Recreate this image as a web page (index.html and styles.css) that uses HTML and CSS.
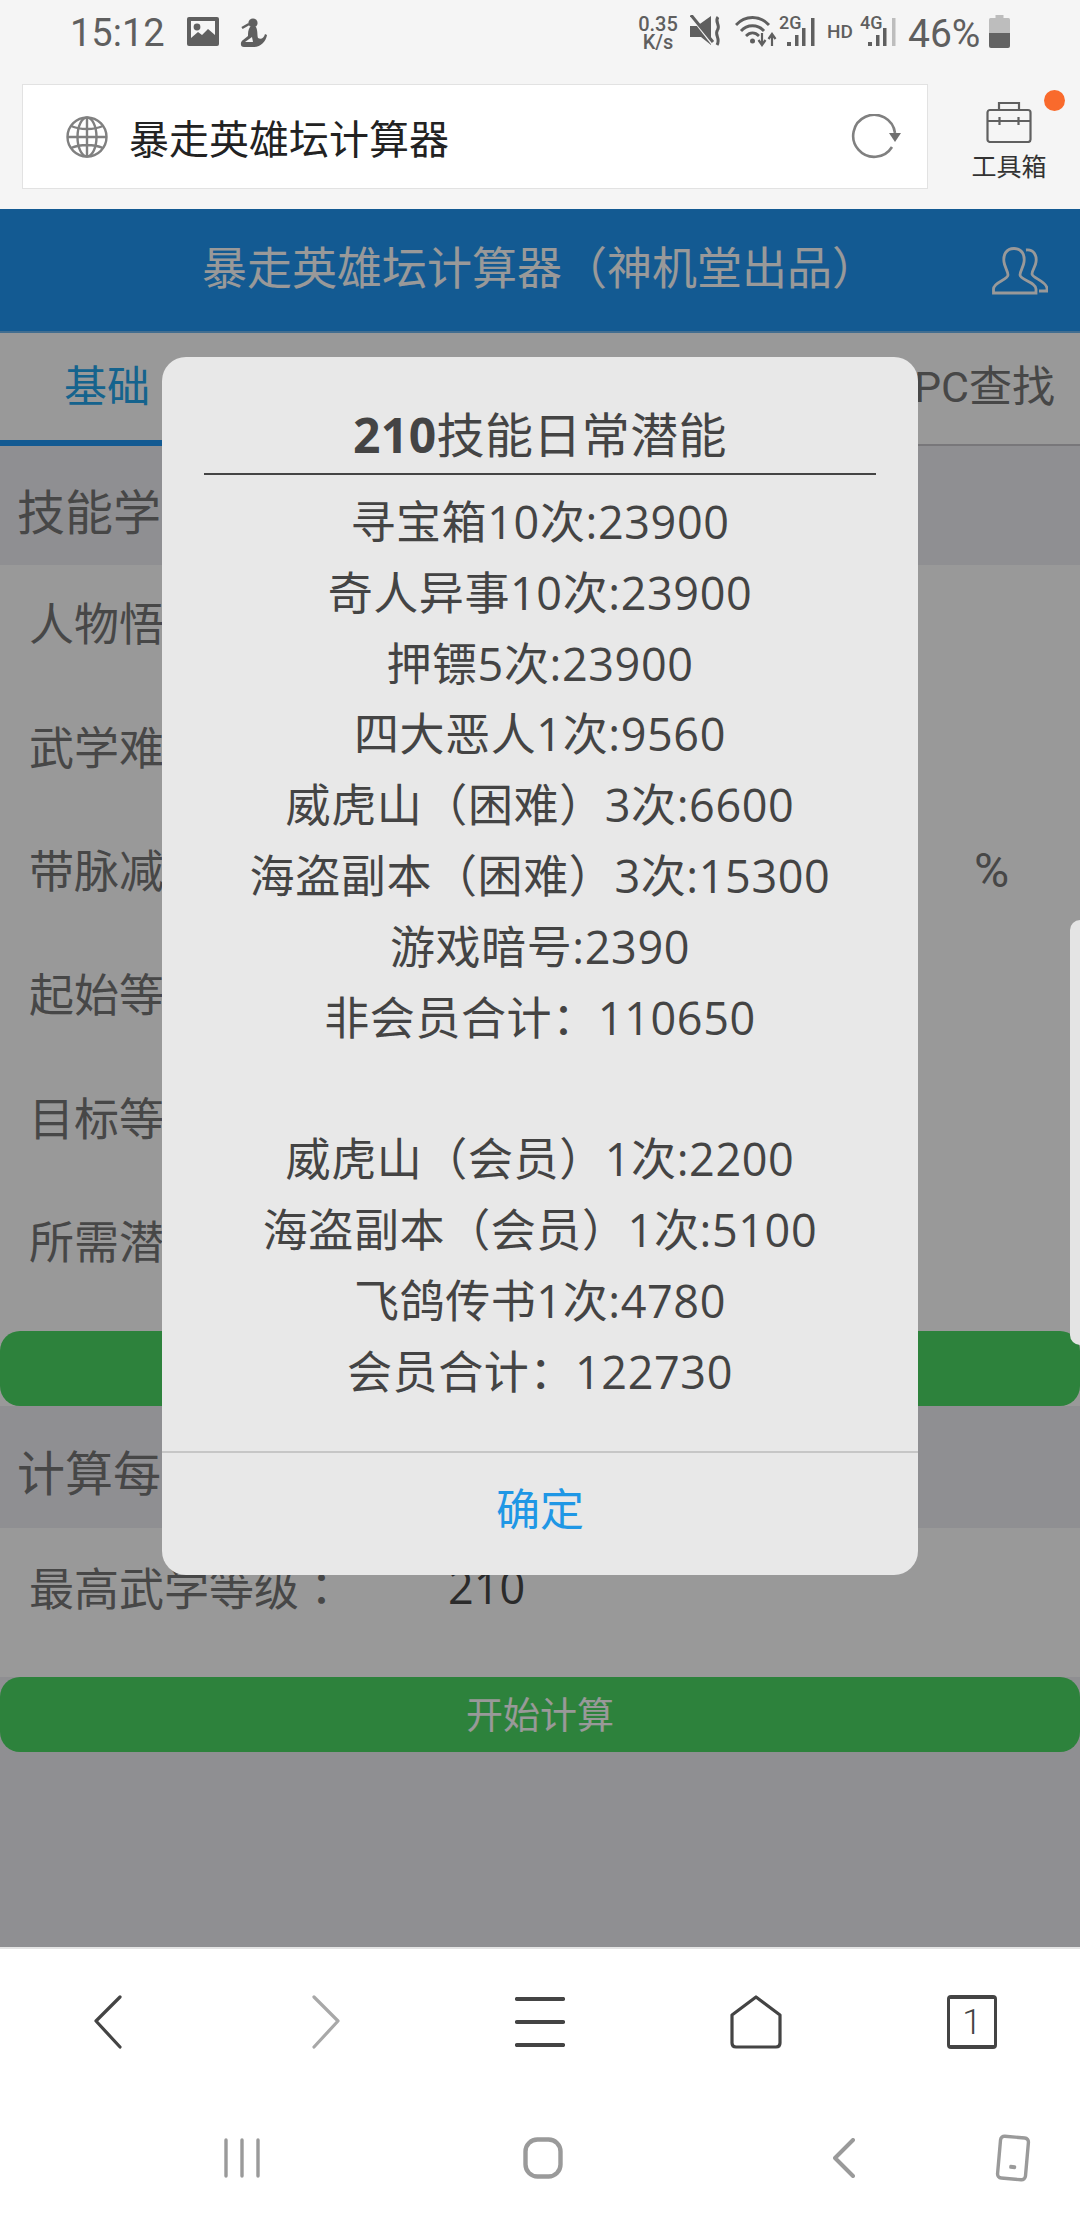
FILE: index.html
```html
<!DOCTYPE html>
<html lang="zh-CN">

<head>
  <meta charset="UTF-8">
  <title>暴走英雄坛计算器</title>
  <link rel="stylesheet" href="styles.css">
</head>

<body>

  <div class="status-bar">
    <span class="clock">15:12</span>
    <svg class="st-image" viewBox="0 0 32 29">
      <rect width="32" height="29" rx="2" fill="#5f5f5f" />
      <rect x="4" y="4" width="24" height="21" fill="#f5f5f5" />
      <circle cx="10" cy="10" r="3.4" fill="#5f5f5f" />
      <path d="M4 21 L11 15 L15 18 L21 12 L28 18 V25 H4 Z" fill="#5f5f5f" />
    </svg>
    <svg class="st-figure" viewBox="0 0 27 29">
      <circle cx="13" cy="5" r="4.6" fill="#5f5f5f" />
      <path d="M2 10 L9 6" stroke="#5f5f5f" stroke-width="2.4" />
      <path d="M10 9 H16 C18 13 17 17 18 20 C21 22 24 20 25 16 L27 17 C26 23 21 29 14 29 H4 C0 29 0 24 3 22 L8 18 C8 15 8 12 10 9 Z" fill="#5f5f5f" />
      <path d="M5 24 L12 19 L13 24 Z" fill="#f5f5f5" />
    </svg>

    <div class="status-right">
      <div class="netspeed">0.35<br>K/s</div>
      <svg class="st-mute" viewBox="0 0 32 32">
        <path d="M0 11 H7 L21 1 V30 L11 22 H0 Z" fill="#5f5f5f" />
        <path d="M1 2 L22 29" stroke="#f5f5f5" stroke-width="2" />
        <path d="M1 0 L23 27" stroke="#5f5f5f" stroke-width="3" />
        <path d="M28 2 C24 7 31 10 27.500 15 C24 20 31 23 27 30" fill="none" stroke="#5f5f5f" stroke-width="3" />
      </svg>
      <svg class="st-wifi" viewBox="0 0 42 32">
        <g fill="none" stroke="#5f5f5f" stroke-width="2.800">
          <path d="M1 10 C10 0 25 0 34 10" />
          <path d="M6 16 C12 9 23 9 29 16" />
          <path d="M11 21 C15 17 20 17 24 21" />
        </g>
        <circle cx="17.500" cy="26" r="2.500" fill="#5f5f5f" />
        <path d="M27 18 V29 M23.500 25 L27 30 L30.500 25 M37 31 V20 M33.500 24 L37 19 L40.500 24" fill="none" stroke="#5f5f5f" stroke-width="2.200" />
      </svg>
      <svg class="st-signal" viewBox="0 -6 36 38">
        <text class="sig-label" x="0" y="14">2G</text>
        <rect x="8" y="27" width="4" height="4" fill="#5f5f5f" />
        <rect x="16" y="20" width="3.500" height="11" fill="#5f5f5f" />
        <rect x="23" y="13" width="3.500" height="18" fill="#5f5f5f" />
        <rect x="32" y="3" width="3.500" height="28" fill="#5f5f5f" />
      </svg>
      <span class="hd">HD</span>
      <svg class="st-signal" viewBox="0 -6 36 38">
        <text class="sig-label" x="0" y="14">4G</text>
        <rect x="8" y="27" width="4" height="4" fill="#5f5f5f" />
        <rect x="16" y="20" width="3.500" height="11" fill="#5f5f5f" />
        <rect x="23" y="13" width="3.500" height="18" fill="#5f5f5f" />
        <rect x="32" y="3" width="3.500" height="28" fill="#bdbdbd" />
      </svg>
      <span class="percent">46%</span>
      <svg class="st-battery" viewBox="0 0 21 33">
        <rect x="6.500" width="8" height="4" fill="#bdbdbd" />
        <path d="M1.500 3 H19.500 Q21 3 21 4.500 V18 H0 V4.500 Q0 3 1.500 3 Z" fill="#bdbdbd" />
        <path d="M0 18 H21 V31 Q21 33 19 33 H2 Q0 33 0 31 Z" fill="#636363" />
      </svg>
    </div>
  </div>

  <div class="browser-bar">
    <div class="address">
      <svg class="globe" viewBox="0 0 42 42" fill="none" stroke="#808080" stroke-width="2.400">
        <circle cx="21" cy="21" r="19.500" />
        <ellipse cx="21" cy="21" rx="9.500" ry="19.500" />
        <path d="M21 1.500 V40.500 M1.500 21 H40.500 M5 10 C14 14 28 14 37 10 M5 32 C14 28 28 28 37 32" />
      </svg>
      <span class="address-text">暴走英雄坛计算器</span>
      <svg class="reload" viewBox="0 0 50 46">
        <path d="M41 33 A21 21 0 1 1 44 19" fill="none" stroke="#808080" stroke-width="2.600" />
        <path d="M38 19 H50 L44 28 Z" fill="#707070" />
      </svg>
    </div>
    <div class="toolbox">
      <span class="toolbox-dot"></span>
      <svg class="toolbox-icon" viewBox="0 0 46 42" fill="none" stroke="#606060" stroke-width="2.200">
        <rect x="1.500" y="9" width="43" height="32" rx="2.500" />
        <path d="M13 9 V2 H33 V9 M1.500 20 H44.500 M13.500 16 V24 M32.500 16 V24" />
      </svg>
      <span class="toolbox-label">工具箱</span>
    </div>
  </div>

  <div class="webview">
    <header class="app-header">
      <h1>暴走英雄坛计算器（神机堂出品）</h1>
      <svg class="users" viewBox="0 0 56 48" fill="none" stroke="#fff" stroke-width="2.800">
        <path d="M22 1.500 C30 1.500 33 8 32 15 C31.500 20 28 24 28 28 C28 33 44 35 44 42 V46 H1.500 V42 C1.500 35 16 33 16 28 C16 24 12.500 20 12 15 C11 8 14 1.500 22 1.500 Z" />
        <path d="M34 3 C42 2 45 9 44 15 C43.500 20 40 23 40 27 C40 31 54 34 55 41 V44 H47" />
      </svg>
    </header>

    <nav class="tabs">
      <div class="tab active">基础</div>
      <div class="tab last">PC查找</div>
    </nav>

    <section class="band"><span>技能学</span></section>
    <div class="row">人物悟</div>
    <div class="row">武学难</div>
    <div class="row">带脉减<span class="unit">%</span></div>
    <div class="row">起始等</div>
    <div class="row">目标等</div>
    <div class="row">所需潜</div>
    <div class="btn-wrap"><button class="btn"></button></div>

    <section class="band band-two"><span>计算每</span></section>
    <div class="row row-level">最高武学等级<span class="mid-colon">：</span><span class="value">210</span></div>
    <button class="btn">开始计算</button>

    <div class="backdrop">
      <div class="dialog">
        <div class="dialog-title"><b>210</b>技能日常潜能</div>
        <div class="dialog-body">
          <p>寻宝箱10次:23900</p>
          <p>奇人异事10次:23900</p>
          <p>押镖5次:23900</p>
          <p>四大恶人1次:9560</p>
          <p>威虎山（困难）3次:6600</p>
          <p>海盗副本（困难）3次:15300</p>
          <p>游戏暗号:2390</p>
          <p>非会员合计<span class="mid-colon">：</span>110650</p>
          <p>&nbsp;</p>
          <p>威虎山（会员）1次:2200</p>
          <p>海盗副本（会员）1次:5100</p>
          <p>飞鸽传书1次:4780</p>
          <p>会员合计<span class="mid-colon">：</span>122730</p>
        </div>
        <div class="dialog-ok">确定</div>
      </div>
    </div>
  </div>

  <div class="toolbar">
    <svg class="tb-chevron" viewBox="0 0 28 54" fill="none" stroke="#444" stroke-width="3.200" stroke-linecap="round" stroke-linejoin="round">
      <path d="M26 2 L2 26 L26 52" />
    </svg>
    <svg class="tb-chevron tb-forward" viewBox="0 0 28 54" fill="none" stroke="#a8a8a8" stroke-width="3.200" stroke-linecap="round" stroke-linejoin="round">
      <path d="M2 2 L26 26 L2 52" />
    </svg>
    <svg class="tb-menu" viewBox="0 0 50 50" fill="none" stroke="#444" stroke-width="4.200" stroke-linecap="round">
      <path d="M2 2 H48 M2 25 H48 M2 48 H48" />
    </svg>
    <svg class="tb-home" viewBox="0 0 52 54" fill="none" stroke="#444" stroke-width="3.200" stroke-linejoin="round">
      <path d="M26 2 L50 20 V48 Q50 52 46 52 H6 Q2 52 2 48 V20 Z" />
    </svg>
    <div class="tb-tabs">1</div>
  </div>

  <div class="navbar">
    <div class="nav-item">
      <svg class="nav-recents" viewBox="0 0 36 40" fill="none" stroke="#9a9a9a" stroke-width="3.400" stroke-linecap="round">
        <path d="M2 2 V38 M18 2 V38 M34 2 V38" />
      </svg>
    </div>
    <div class="nav-item">
      <svg class="nav-home" viewBox="0 0 40 42">
        <rect x="2.500" y="2.500" width="35" height="37" rx="12" fill="none" stroke="#9a9a9a" stroke-width="4.400" />
      </svg>
    </div>
    <div class="nav-item">
      <svg class="nav-back" viewBox="0 0 22 40" fill="none" stroke="#9a9a9a" stroke-width="4" stroke-linecap="round" stroke-linejoin="round">
        <path d="M20 2 L2 20 L20 38" />
      </svg>
    </div>
    <div class="nav-phone">
      <svg viewBox="0 0 38 48" fill="none" stroke="#9a9a9a">
        <g transform="rotate(5 19 24)">
          <rect x="5" y="3" width="28" height="42" rx="4" stroke-width="3.400" />
          <rect x="16" y="31" width="7" height="4" rx="1.500" fill="#9a9a9a" stroke="none" />
        </g>
      </svg>
    </div>
  </div>

  <div class="edge-handle"></div>

</body>

</html>
```

FILE: styles.css
```css
* {
  box-sizing: border-box;
}

html,
body {
  margin: 0;
  padding: 0;
}

body {
  position: relative;
  width: 1080px;
  height: 2220px;
  overflow: hidden;
  display: flex;
  flex-direction: column;
  font-family: Roboto, "Noto Sans CJK SC", sans-serif;
  background: #fff;
  color: #333;
}

svg {
  display: block;
  flex-shrink: 0;
}

/* centred full-width colon, as the reference draws it */
.mid-colon {
  font-family: "Noto Sans CJK TC", sans-serif;
  line-height: 0;
}

/* Status bar */
.status-bar {
  height: 84px;
  padding-left: 70px;
  display: flex;
  align-items: flex-start;
  background: #f5f5f5;
  color: #5f5f5f;
}

.clock {
  width: 95px;
  margin-top: 11px;
  font-size: 38px;
  line-height: 44px;
}

.st-image {
  width: 32px;
  height: 29px;
  margin: 17px 0 0 22px;
}

.st-figure {
  width: 27px;
  height: 29px;
  margin: 18px 0 0 21px;
}

.status-right {
  margin-left: auto;
  padding: 15px 70px 0 0;
  display: flex;
  align-items: flex-start;
}

.netspeed {
  width: 42px;
  margin-right: 11px;
  font-size: 20px;
  font-weight: 500;
  line-height: 18px;
  text-align: center;
}

.st-mute {
  width: 32px;
  height: 32px;
  margin-right: 13px;
}

.st-wifi {
  width: 42px;
  height: 32px;
  margin-right: 2px;
}

.st-signal {
  width: 36px;
  height: 38px;
  margin: -6px 12px 0 0;
}

.sig-label {
  font-size: 18px;
  font-weight: 500;
  fill: #5f5f5f;
}

.hd {
  width: 25px;
  margin: 8px 8px 0 0;
  font-size: 19px;
  font-weight: 500;
  line-height: 18px;
}

.percent {
  width: 70px;
  margin-right: 11px;
  font-size: 39px;
  line-height: 38px;
}

.st-battery {
  width: 21px;
  height: 33px;
}

/* Browser bar */
.browser-bar {
  height: 125px;
  display: flex;
  align-items: flex-start;
  background: #f5f5f5;
}

.address {
  width: 906px;
  height: 105px;
  margin-left: 22px;
  padding-left: 43px;
  display: flex;
  align-items: center;
  background: #fff;
  border: 1px solid #e2e2e2;
}

.globe {
  width: 42px;
  height: 42px;
}

.address-text {
  margin-left: 21px;
  font-size: 40px;
  color: #222;
}

.reload {
  width: 50px;
  height: 46px;
  margin-left: auto;
  margin-right: 26px;
}

.toolbox {
  position: relative;
  flex: 1;
  padding: 17px 0 0 10px;
  display: flex;
  flex-direction: column;
  align-items: center;
}

.toolbox-dot {
  position: absolute;
  top: 6px;
  left: 116px;
  width: 21px;
  height: 21px;
  border-radius: 50%;
  background: #f96a2c;
}

.toolbox-icon {
  width: 46px;
  height: 42px;
}

.toolbox-label {
  margin-top: 9px;
  font-size: 25px;
  line-height: 32px;
  color: #333;
}

/* Page below the backdrop */
.webview {
  position: relative;
  height: 1738px;
  background: #efeff4;
  overflow: hidden;
}

.app-header {
  height: 124px;
  padding: 0 32px 0 202px;
  display: flex;
  align-items: center;
  justify-content: space-between;
  background: #2196f3;
  border-bottom: 2px solid #6fb8f0;
}

.app-header h1 {
  margin: 0;
  font-size: 45px;
  font-weight: 400;
  line-height: 60px;
  color: #fff;
}

.users {
  width: 56px;
  height: 48px;
  margin-top: 2px;
}

.tabs {
  height: 113px;
  padding-bottom: 12px;
  display: flex;
  align-items: center;
  justify-content: space-between;
  background: #fff;
  border-bottom: 2px solid #c8c7cc;
  position: relative;
}

.tab {
  font-size: 43px;
  color: #777;
}

.tab.active {
  padding-left: 64px;
  color: #23a5ec;
}

.tab.active::after {
  content: '';
  position: absolute;
  left: 0;
  bottom: -2px;
  width: 220px;
  height: 6px;
  background: #2196f3;
}

.tab.last {
  padding-right: 25px;
}

.band {
  height: 119px;
  padding: 6px 0 0 17px;
  display: flex;
  align-items: center;
  font-size: 48px;
  color: #777;
}

.band-two {
  height: 122px;
}

.row {
  position: relative;
  height: 123.7px;
  padding: 0 0 11px 29px;
  display: flex;
  align-items: center;
  font-size: 45px;
  color: #777;
  background: #fff;
}

.unit {
  position: absolute;
  left: 974px;
  top: 33px;
  font-size: 48px;
  line-height: 52px;
}

.btn-wrap {
  padding-top: 24px;
  background: #fff;
}

.btn {
  display: block;
  width: 1080px;
  height: 75px;
  padding: 0 0 4px;
  border: none;
  border-radius: 20px;
  font-family: inherit;
  font-size: 37px;
  color: #fff;
  background: #4cd964;
}

.row-level {
  height: 149px;
  padding-bottom: 32px;
}

.value {
  margin-left: 104px;
  font-family: "Open Sans", sans-serif;
  color: #484848;
}

/* Backdrop and dialog */
.backdrop {
  position: absolute;
  top: 0;
  left: 0;
  width: 100%;
  height: 100%;
  padding-top: 148px;
  display: flex;
  justify-content: center;
  align-items: flex-start;
  background: rgba(0, 0, 0, 0.4);
}

.dialog {
  width: 756px;
  height: 1218px;
  display: flex;
  flex-direction: column;
  border-radius: 24px;
  background: #e8e8e8;
  color: #444;
  font-family: "Open Sans", "Noto Sans CJK SC", sans-serif;
  text-align: center;
}

.dialog-title {
  margin: 0 42px;
  padding: 54px 0 14px;
  font-size: 48px;
  line-height: 48px;
  letter-spacing: 0.4px;
  border-bottom: 2px solid #444;
}

.dialog-body {
  padding-top: 12px;
  font-size: 45px;
  line-height: 70px;
  letter-spacing: 0.6px;
}

.dialog-body p {
  height: 70.8px;
  margin: 0;
}

.dialog-ok {
  margin-top: auto;
  height: 124px;
  padding-bottom: 14px;
  display: flex;
  align-items: center;
  justify-content: center;
  font-size: 44px;
  color: #1f97e5;
  border-top: 2px solid #c6c6c6;
}

/* Browser toolbar */
.toolbar {
  height: 148px;
  display: grid;
  grid-template-columns: repeat(5, 216px);
  justify-items: center;
  align-items: center;
  background: #fff;
  border-top: 2px solid #e4e4e4;
}

.tb-chevron {
  width: 28px;
  height: 54px;
}

.tb-forward {
  margin-left: 3px;
}

.tb-menu {
  width: 50px;
  height: 50px;
}

.tb-home {
  width: 52px;
  height: 54px;
}

.tb-tabs {
  width: 50px;
  height: 54px;
  display: flex;
  align-items: center;
  justify-content: center;
  font-size: 35px;
  font-weight: 300;
  color: #444;
  border: 3px solid #444;
  border-top-width: 4px;
  border-bottom-width: 4px;
  border-radius: 4px;
}

/* System navigation */
.navbar {
  flex: 1;
  padding-left: 91px;
  display: flex;
  align-items: center;
  background: #fff;
}

.nav-item {
  width: 301px;
  display: flex;
  justify-content: center;
}

.nav-recents {
  width: 36px;
  height: 40px;
}

.nav-home {
  width: 40px;
  height: 42px;
}

.nav-back {
  width: 22px;
  height: 40px;
}

.nav-phone svg {
  width: 38px;
  height: 48px;
}

.edge-handle {
  position: absolute;
  top: 920px;
  right: 0;
  width: 10px;
  height: 425px;
  background: #e4e4e4;
  border-radius: 12px 0 0 12px;
}
```
